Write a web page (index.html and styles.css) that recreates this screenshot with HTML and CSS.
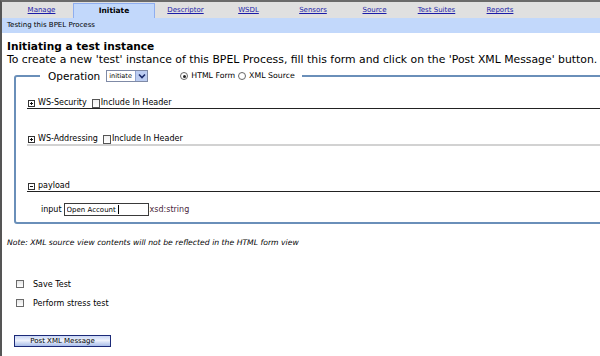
FILE: index.html
```html
<!DOCTYPE html>
<html>
<head>
<meta charset="utf-8">
<title>Initiate</title>
<link rel="stylesheet" href="styles.css">
</head>
<body>
<div class="page">
  <nav class="tabs">
    <a class="tab w-manage" href="#">Manage</a>
    <span class="tab tab-active w-initiate">Initiate</span>
    <a class="tab w-descriptor" href="#">Descriptor</a>
    <a class="tab w-wsdl" href="#">WSDL</a>
    <a class="tab w-sensors" href="#">Sensors</a>
    <a class="tab w-source" href="#">Source</a>
    <a class="tab w-suites" href="#">Test Suites</a>
    <a class="tab w-reports" href="#">Reports</a>
  </nav>
  <div class="band">Testing this BPEL Process</div>
  <main class="content">
    <h1 class="title">Initiating a test instance</h1>
    <p class="intro">To create a new 'test' instance of this BPEL Process, fill this form and click on the 'Post XML Message' button.</p>
    <fieldset class="opset">
      <legend class="oplegend">
        <span class="legend-row">
          <span class="oplabel">Operation</span>
          <span class="select">
            <span class="select-val">initiate</span>
            <span class="select-btn"><svg width="8" height="6" viewBox="0 0 8 6"><path d="M1 1.5 L4 4.5 L7 1.5" fill="none" stroke="#1a2a6a" stroke-width="1.6"/></svg></span>
          </span>
          <span class="radio-group">
            <span class="radio radio-on"></span><span class="radio-label">HTML Form</span>
            <span class="radio"></span><span class="radio-label">XML Source</span>
          </span>
        </span>
      </legend>

      <div class="sec-head sec-first head-dark">
        <svg class="toggle" width="7" height="7" viewBox="0 0 7 7"><rect x="0.5" y="0.5" width="6" height="6" fill="#fff" stroke="#333"/><path d="M2 3.5 H5 M3.5 2 V5" stroke="#111" stroke-width="1"/></svg>
        <span class="sec-name">WS-Security</span>
        <span class="cbox"></span><span class="cb-label">Include In Header</span>
      </div>

      <div class="sec-head sec-second head-light">
        <svg class="toggle" width="7" height="7" viewBox="0 0 7 7"><rect x="0.5" y="0.5" width="6" height="6" fill="#fff" stroke="#333"/><path d="M2 3.5 H5 M3.5 2 V5" stroke="#111" stroke-width="1"/></svg>
        <span class="sec-name">WS-Addressing</span>
        <span class="cbox"></span><span class="cb-label">Include In Header</span>
      </div>

      <div class="sec-head sec-third head-dark">
        <svg class="toggle" width="7" height="7" viewBox="0 0 7 7"><rect x="0.5" y="0.5" width="6" height="6" fill="#fff" stroke="#333"/><path d="M2 3.5 H5" stroke="#111" stroke-width="1"/></svg>
        <span class="sec-name">payload</span>
      </div>

      <div class="input-row">
        <span class="in-label">input</span>
        <span class="in-wrap"><input class="in-field" type="text" value="Open Account"><span class="caret"></span></span>
        <span class="in-type">xsd:string</span>
      </div>
    </fieldset>

    <p class="note">Note: XML source view contents will not be reflected in the HTML form view</p>

    <div class="opt opt-first"><span class="obox"></span><span class="opt-label">Save Test</span></div>
    <div class="opt"><span class="obox"></span><span class="opt-label">Perform stress test</span></div>

    <button class="post" type="button">Post XML Message</button>
  </main>
</div>
</body>
</html>
```

FILE: styles.css
```css
html, body {
  margin: 0;
  height: 100%;
}
body {
  font-family: "DejaVu Sans", Verdana, sans-serif;
  color: #000;
  background: #fff;
  overflow: hidden;
}
.page {
  min-height: 100%;
  box-sizing: border-box;
  border-left: 2px solid #555;
  border-top: 2px solid #6a6a6a;
  overflow: hidden;
}

/* tabs */
.tabs {
  display: flex;
  align-items: flex-end;
  height: 16px;
  background: #e0e0e0;
  padding-left: 8px;
}
.tab {
  flex: none;
  box-sizing: border-box;
  height: 16px;
  line-height: 16px;
  text-align: center;
  font-size: 7px;
  color: #1c1ca8;
  text-decoration: underline;
}
.tab-active {
  height: 15px;
  line-height: 14px;
  background: #c2d8fb;
  border: 1px solid #8eaef0;
  border-bottom: none;
  color: #000;
  font-weight: bold;
  font-size: 7.5px;
  text-decoration: none;
}
.w-manage { width: 63px; }
.w-initiate { width: 82px; }
.w-descriptor { width: 61px; }
.w-wsdl { width: 65px; }
.w-sensors { width: 64px; }
.w-source { width: 59px; }
.w-suites { width: 65px; }
.w-reports { width: 62px; }

.band {
  height: 15px;
  line-height: 15px;
  background: #c2d8fb;
  font-size: 7px;
  padding-left: 5px;
}

/* content */
.content {
  padding: 7px 0 0 5px;
}
.title {
  margin: 0;
  font-size: 10.6px;
  font-weight: bold;
  line-height: 13px;
}
.intro {
  margin: 0;
  font-size: 10.85px;
  line-height: 13px;
  white-space: nowrap;
}

.opset {
  margin: 4px 0 0 7px;
  width: 640px;
  border: 2px solid #6a8fb9;
  border-radius: 3px;
  padding: 0 0 6px 11px;
}
.oplegend {
  margin-left: 13px;
  padding: 0 4px 0 8px;
}
.legend-row {
  display: flex;
  align-items: center;
  height: 12px;
}
.oplabel {
  font-size: 10.5px;
  line-height: 12px;
}
.select {
  display: flex;
  margin-left: 6px;
  height: 12px;
  width: 42px;
  box-sizing: border-box;
  border: 1px solid #7f8aa6;
  background: #fff;
}
.select-val {
  flex: 1;
  font-size: 6.5px;
  line-height: 10px;
  padding-left: 2px;
}
.select-btn {
  width: 11px;
  display: flex;
  align-items: center;
  justify-content: center;
  background: #bccdf2;
  border-left: 1px solid #8fa3d0;
}
.radio-group {
  display: flex;
  align-items: center;
  margin-left: 32px;
}
.radio {
  width: 8px;
  height: 8px;
  box-sizing: border-box;
  border: 1px solid #666;
  border-radius: 50%;
  background: #fff;
  position: relative;
  margin-right: 3px;
}
.radio-on::after {
  content: "";
  position: absolute;
  left: 1.5px;
  top: 1.5px;
  width: 3px;
  height: 3px;
  border-radius: 50%;
  background: #222;
}
.radio-label {
  font-size: 7.8px;
  line-height: 10px;
  margin-right: 3px;
}

.sec-head {
  display: flex;
  align-items: center;
  height: 10px;
  padding-left: 1px;
  font-size: 8px;
  line-height: 10px;
}
.head-dark { border-bottom: 1px solid #222; }
.head-light { border-bottom: 2px solid #d2d2d2; }
.sec-first { margin-top: 16px; }
.sec-second { margin-top: 25px; }
.sec-third { margin-top: 35px; }
.toggle { margin-right: 3px; flex: none; }
.sec-name { margin-right: 5px; }
.cbox {
  width: 8px;
  height: 9px;
  box-sizing: border-box;
  border: 1px solid #555;
  background: linear-gradient(#f0f0f0, #fff);
  flex: none;
}
.cb-label { margin-left: 1px; }

.input-row {
  display: flex;
  align-items: center;
  margin-top: 11px;
  padding-left: 14px;
  font-size: 8px;
  height: 13px;
}
.in-label { margin-right: 2px; }
.in-wrap {
  position: relative;
  display: flex;
}
.in-field {
  box-sizing: border-box;
  width: 85px;
  height: 13px;
  border: 1px solid #3a3a3a;
  padding: 0 0 0 2px;
  margin: 0;
  font-family: "DejaVu Sans", Verdana, sans-serif;
  font-size: 7px;
  color: #000;
  background: #fff;
  outline: none;
}
.caret {
  position: absolute;
  left: 54px;
  top: 2px;
  width: 1px;
  height: 9px;
  background: #000;
}
.in-type {
  margin-left: 1px;
  color: #4a1f3c;
}

.note {
  margin: 14px 0 0 0;
  font-size: 7.7px;
  line-height: 10px;
  font-style: italic;
}

.opt {
  display: flex;
  align-items: center;
  height: 10px;
  margin-top: 9px;
  padding-left: 9px;
  font-size: 8px;
}
.opt-first { margin-top: 31px; }
.obox {
  width: 8px;
  height: 8px;
  box-sizing: border-box;
  border: 1px solid #6a6a6a;
  background: linear-gradient(#e6e6e6, #fff);
  margin-right: 9px;
}

.post {
  display: block;
  margin: 27px 0 0 7px;
  width: 97px;
  height: 12px;
  box-sizing: border-box;
  padding: 0;
  border: 1px solid #1c2a78;
  background: linear-gradient(#c9d6f4, #eef2fc 45%, #a9bde9);
  font-family: "DejaVu Sans", Verdana, sans-serif;
  font-size: 7px;
  line-height: 10px;
  color: #000;
}
```
